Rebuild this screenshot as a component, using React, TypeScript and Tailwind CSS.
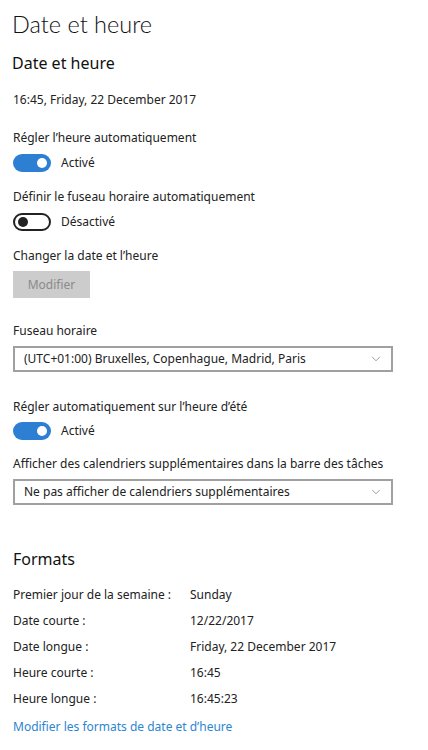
import { ChevronDown } from "lucide-react";

const Toggle = ({ on, label }: { on: boolean; label: string }) => (
  <div className="flex items-center gap-[10px] h-[20px]">
    {on ? (
      <div className="w-[38px] h-[18px] rounded-full bg-[#2c7fd3] flex items-center justify-end pr-[4px]">
        <div className="w-[10px] h-[10px] rounded-full bg-white" />
      </div>
    ) : (
      <div className="w-[38px] h-[18px] rounded-full border-2 border-[#222] flex items-center pl-[3px]">
        <div className="w-[10px] h-[10px] rounded-full bg-[#222]" />
      </div>
    )}
    <span className="text-[12px] text-[#222]">{label}</span>
  </div>
);

const Select = ({ value }: { value: string }) => (
  <div className="w-[380px] h-[26px] border-2 border-[#a0a0a0] flex items-center justify-between pl-[9px] pr-[8px]">
    <span className="text-[12px] text-[#222]">{value}</span>
    <ChevronDown size={14} strokeWidth={1.25} className="text-[#777]" />
  </div>
);

const formats = [
  ["Premier jour de la semaine :", "Sunday"],
  ["Date courte :", "12/22/2017"],
  ["Date longue :", "Friday, 22 December 2017"],
  ["Heure courte :", "16:45"],
  ["Heure longue :", "16:45:23"],
];

export default function App() {
  return (
    <div className="w-[428px] h-[750px] bg-white overflow-hidden font-['Noto_Sans',sans-serif] text-[#222]">
      <div className="pl-[12px] pt-[7px]">
        <h1 className="font-['Lato',sans-serif] text-[23.5px] leading-[34px] font-light text-[#111]">Date et heure</h1>
        <h2 className="text-[16px] leading-[22px] text-[#111] mt-[11px]">Date et heure</h2>
      </div>

      <div className="pl-[13px]">
        <div className="text-[12px] leading-[18px] mt-[17px]">16:45, Friday, 22 December 2017</div>

        <div className="text-[12px] leading-[18px] mt-[20px]">Régler l’heure automatiquement</div>
        <div className="mt-[6px]"><Toggle on label="Activé" /></div>

        <div className="text-[12px] leading-[18px] mt-[15px]">Définir le fuseau horaire automatiquement</div>
        <div className="mt-[6px]"><Toggle on={false} label="Désactivé" /></div>

        <div className="text-[12px] leading-[18px] mt-[15px]">Changer la date et l’heure</div>
        <div className="mt-[6px] w-[77px] h-[27px] bg-[#cccccc] flex items-center justify-center text-[12px] text-[#8a8a8a]">Modifier</div>

        <div className="text-[12px] leading-[18px] mt-[24px]">Fuseau horaire</div>
        <div className="mt-[6px]"><Select value="(UTC+01:00) Bruxelles, Copenhague, Madrid, Paris" /></div>

        <div className="text-[12px] leading-[18px] mt-[26px]">Régler automatiquement sur l’heure d’été</div>
        <div className="mt-[5px]"><Toggle on label="Activé" /></div>

        <div className="text-[12px] leading-[18px] mt-[14px]">Afficher des calendriers supplémentaires dans la barre des tâches</div>
        <div className="mt-[6px]"><Select value="Ne pas afficher de calendriers supplémentaires" /></div>

        <h2 className="text-[16px] leading-[22px] text-[#111] mt-[43px]">Formats</h2>

        <div className="mt-[12px] flex flex-col">
          {formats.map(([k, v]) => (
            <div key={k} className="flex h-[26px] items-center text-[12px]">
              <span className="w-[177px]">{k}</span>
              <span>{v}</span>
            </div>
          ))}
        </div>
        <div className="text-[12px] leading-[18px] mt-[6px] text-[#2a86d1]">Modifier les formats de date et d’heure</div>
      </div>
    </div>
  );
}
